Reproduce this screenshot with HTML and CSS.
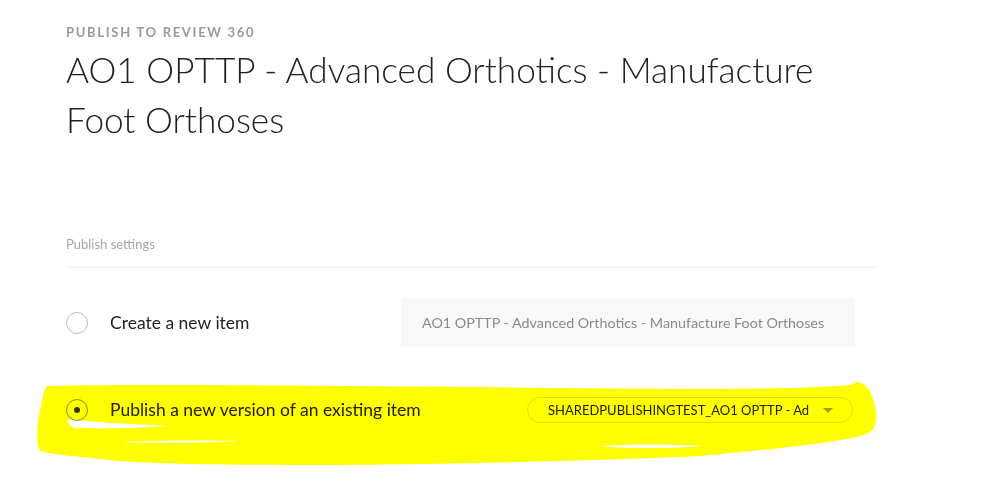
FILE: index.html
```html
<!DOCTYPE html>
<html lang="en">
<head>
<meta charset="utf-8">
<title>Publish to Review 360</title>
<link rel="stylesheet" href="styles.css">
</head>
<body>
<main class="page">
  <p class="eyebrow">PUBLISH TO REVIEW 360</p>
  <h1 class="title">AO1 OPTTP - Advanced Orthotics - Manufacture Foot Orthoses</h1>

  <section class="settings">
    <h2 class="settings-label">Publish settings</h2>

    <div class="option-row">
      <span class="radio"></span>
      <span class="option-label">Create a new item</span>
      <div class="text-field">AO1 OPTTP - Advanced Orthotics - Manufacture Foot Orthoses</div>
    </div>

    <div class="option-row">
      <span class="radio checked"></span>
      <span class="option-label">Publish a new version of an existing item</span>
      <div class="select-pill">
        <span class="select-text">SHAREDPUBLISHINGTEST_AO1 OPTTP - Ad</span>
        <span class="caret"></span>
      </div>
    </div>
  </section>

  <svg class="highlight" viewBox="0 0 998 497" width="998" height="497" aria-hidden="true">
    <path fill="#ffff00" d="M47,386 C200,383 500,388 700,389 C780,389 830,387 850,385 L857,382 C866,383 871,391 872,397 C876,405 878,420 874,428 C870,434 862,436 852,438 C810,446 760,450 700,456 C600,461 400,465 300,465 C200,465 130,463 100,459 C80,456 60,456 40,451 C35,440 37,420 41,406 C43,396 44,389 47,386 Z"/>
    <path fill="#ffffff" d="M68,419 C90,422 130,424 168,426 C140,428 100,429 75,428 C70,426 67,423 68,419 Z"/>
    <path fill="#ffffff" opacity="0.8" d="M120,442 C160,440 210,440 240,441 C210,443 160,444 120,442 Z"/>
    <path fill="#ffffff" d="M600,446 C630,444 670,444 702,446 C670,449 630,449 600,446 Z"/>
  </svg>
</main>
</body>
</html>
```

FILE: styles.css
```css
* {
  box-sizing: border-box;
}

html, body {
  margin: 0;
  padding: 0;
  background: #ffffff;
}

body {
  font-family: Lato, "Open Sans", "Liberation Sans", sans-serif;
  color: #222222;
}

.page {
  position: relative;
  width: 998px;
  height: 497px;
  padding: 22px 0 0 66px;
  overflow: hidden;
}

.eyebrow {
  margin: 0;
  font-size: 13px;
  font-weight: 700;
  letter-spacing: 1.7px;
  line-height: 20px;
  color: #999999;
}

.title {
  margin: 2px 0 0;
  max-width: 790px;
  font-size: 35.2px;
  font-weight: 300;
  line-height: 50px;
  color: #222222;
}

.settings {
  width: 810px;
  margin-top: 91px;
}

.settings-label {
  margin: 0;
  padding-bottom: 14px;
  font-size: 13px;
  font-weight: 400;
  line-height: 18px;
  color: #a6a6a6;
  border-bottom: 1px solid #ececec;
}

.option-row {
  display: flex;
  align-items: center;
  width: 789px;
}

.option-row:first-of-type {
  margin-top: 30px;
}

.option-row + .option-row {
  margin-top: 50px;
}

.radio {
  flex: none;
  width: 22px;
  height: 22px;
  border-radius: 50%;
  border: 1px solid #bdbdbd;
  margin-right: 22px;
  display: flex;
  align-items: center;
  justify-content: center;
}

.radio.checked {
  border-color: #8a8a8a;
}

.radio.checked::after {
  content: "";
  width: 6px;
  height: 6px;
  border-radius: 50%;
  background: #333333;
}

.option-label {
  font-size: 17.5px;
  line-height: 22px;
  color: #222222;
}

.text-field {
  margin-left: auto;
  width: 454px;
  height: 49px;
  padding: 0 21px;
  display: flex;
  align-items: center;
  background: #f8f8f8;
  font-size: 14.3px;
  color: #8a8a8a;
  white-space: nowrap;
  overflow: hidden;
}

.select-pill {
  margin-left: auto;
  margin-right: 2px;
  width: 326px;
  height: 26px;
  border: 1px solid #dedede;
  border-radius: 13px;
  padding: 0 20px;
  display: flex;
  align-items: center;
  justify-content: space-between;
}

.select-text {
  font-size: 13px;
  color: #222222;
  white-space: nowrap;
}

.caret {
  width: 0;
  height: 0;
  border-left: 5px solid transparent;
  border-right: 5px solid transparent;
  border-top: 5px solid #a0a0a0;
  margin-right: -1px;
}

.highlight {
  position: absolute;
  left: 0;
  top: 0;
  pointer-events: none;
  mix-blend-mode: multiply;
}
```
